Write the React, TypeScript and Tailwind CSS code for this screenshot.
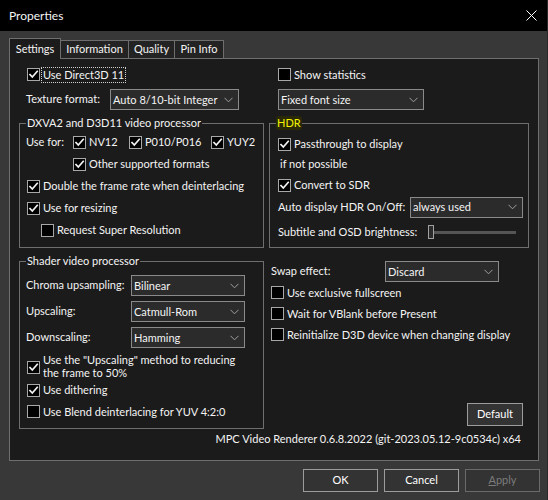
import React from 'react';

// Properties dialog - MPC Video Renderer settings page (dark theme)

function CheckMark() {
  return (
    <svg width="11" height="11" viewBox="0 0 11 11" className="block">
      <path d="M2 5.6 L4.3 8 L9.2 2.4" fill="none" stroke="#f2f2f2" strokeWidth="1.7" strokeLinecap="square" />
    </svg>
  );
}

function Check({ checked, label, focus }: { checked?: boolean; label: React.ReactNode; focus?: boolean }) {
  return (
    <div className="flex items-center whitespace-nowrap">
      <div className="w-[13px] h-[13px] shrink-0 border border-[#a8a8a8] bg-black flex items-center justify-center">
        {checked && <CheckMark />}
      </div>
      <span className={focus ? 'ml-[2px] px-px outline outline-1 outline-dotted outline-[#d0d0d0] leading-[14px]' : 'ml-[3px] leading-[14px]'}>
        {label}
      </span>
    </div>
  );
}

function Chevron() {
  return (
    <svg width="9" height="6" viewBox="0 0 9 6" className="block">
      <path d="M0.5 0.8 L4.5 4.8 L8.5 0.8" fill="none" stroke="#a0a0a0" strokeWidth="1" />
    </svg>
  );
}

function Select({ value, className }: { value: string; className: string }) {
  return (
    <div className={`h-[21px] shrink-0 border border-[#8a8a8a] bg-[#2b2b2b] flex items-center justify-between pl-[2px] pr-[5px] whitespace-nowrap ${className}`}>
      <span className="leading-[14px]">{value}</span>
      <Chevron />
    </div>
  );
}

function Group({ title, className, children, hdr }: { title: string; className: string; children: React.ReactNode; hdr?: boolean }) {
  return (
    <div className={`relative border border-[#6e6e6e] ${className}`}>
      <span
        className={
          hdr
            ? 'absolute left-[6px] top-[-8px] px-px leading-[14px] text-[#f4f400] bg-[#2a2a08] rounded-[3px]'
            : 'absolute left-[6px] top-[-8px] px-px leading-[14px] bg-[#1b1b1b] whitespace-nowrap'
        }
      >
        {title}
      </span>
      {children}
    </div>
  );
}

function Button({ label, disabled, className }: { label: React.ReactNode; disabled?: boolean; className: string }) {
  return (
    <div
      className={`h-[23px] flex items-center justify-center bg-[#333333] border ${
        disabled ? 'border-[#6a6a6a] text-[#7c7c7c]' : 'border-[#9c9c9c] text-white'
      } ${className}`}
    >
      {label}
    </div>
  );
}

export default function App() {
  return (
    <div className="w-[548px] h-[500px] bg-[#383838] text-[#f4f4f4] text-[11px] font-['Lato',sans-serif] flex flex-col overflow-hidden border-r border-[#2a2a2a] whitespace-nowrap">
      {/* title bar */}
      <div className="h-[31px] bg-black flex items-center justify-between pl-[9px] pr-[10px] shrink-0">
        <span className="text-[12px]">Properties</span>
        <svg width="11" height="11" viewBox="0 0 11 11">
          <path d="M0.5 0.5 L10.5 10.5 M10.5 0.5 L0.5 10.5" stroke="#ffffff" strokeWidth="1" />
        </svg>
      </div>

      {/* tabs */}
      <div className="mt-[7px] ml-[9px] h-[20px] flex items-end shrink-0">
        <div className="relative z-10 h-[21px] -mb-px w-[52px] bg-[#1b1b1b] border border-b-0 border-[#6e6e6e] flex items-center justify-center">
          Settings
        </div>
        <div className="h-[18px] w-[68px] bg-[#232323] border border-b-0 border-l-0 border-[#6e6e6e] flex items-center justify-center">
          Information
        </div>
        <div className="h-[18px] w-[46px] bg-[#232323] border border-b-0 border-l-0 border-[#6e6e6e] flex items-center justify-center">
          Quality
        </div>
        <div className="h-[18px] w-[49px] bg-[#232323] border border-b-0 border-l-0 border-[#6e6e6e] flex items-center justify-center">
          Pin Info
        </div>
      </div>

      {/* page */}
      <div className="ml-[9px] w-[530px] h-[403px] border border-[#6e6e6e] bg-[#1b1b1b] flex flex-col shrink-0">
        <div className="flex pl-[9px] gap-[5px]">
          {/* left column */}
          <div className="w-[245px] flex flex-col">
            <div className="mt-[9px] h-[13px] pl-[8px] flex items-center">
              <Check checked focus label="Use Direct3D 11" />
            </div>
            <div className="mt-[8px] h-[21px] pl-[7px] flex items-center">
              <span className="w-[84px]">Texture format:</span>
              <Select value="Auto 8/10-bit Integer" className="w-[129px]" />
            </div>

            <Group title="DXVA2 and D3D11 video processor" className="mt-[13px] h-[125px] w-[245px] pt-[7px]">
              <div className="h-[22px] pl-[6px] flex items-center">
                <span className="w-[47px]">Use for:</span>
                <div className="w-[56px]">
                  <Check checked label="NV12" />
                </div>
                <div className="w-[82px]">
                  <Check checked label="P010/P016" />
                </div>
                <Check checked label="YUY2" />
              </div>
              <div className="h-[22px] pl-[53px] flex items-center">
                <Check checked label="Other supported formats" />
              </div>
              <div className="h-[22px] pl-[7px] flex items-center">
                <Check checked label="Double the frame rate when deinterlacing" />
              </div>
              <div className="h-[22px] pl-[7px] flex items-center">
                <Check checked label="Use for resizing" />
              </div>
              <div className="h-[22px] pl-[21px] flex items-center">
                <Check label="Request Super Resolution" />
              </div>
            </Group>

            <Group title="Shader video processor" className="mt-[13px] h-[168px] w-[245px] pt-[13px]">
              <div className="h-[21px] pl-[6px] flex items-center">
                <span className="w-[105px]">Chroma upsampling:</span>
                <Select value="Bilinear" className="w-[114px]" />
              </div>
              <div className="mt-[5px] h-[21px] pl-[6px] flex items-center">
                <span className="w-[105px]">Upscaling:</span>
                <Select value="Catmull-Rom" className="w-[114px]" />
              </div>
              <div className="mt-[5px] h-[21px] pl-[6px] flex items-center">
                <span className="w-[105px]">Downscaling:</span>
                <Select value="Hamming" className="w-[114px]" />
              </div>
              <div className="mt-[5px] pl-[7px] flex items-start">
                <div className="mt-[8px] w-[13px] h-[13px] shrink-0 border border-[#a8a8a8] bg-black flex items-center justify-center">
                  <CheckMark />
                </div>
                <span className="ml-[3px] leading-[13px]">
                  Use the "Upscaling" method to reducing
                  <br />
                  the frame to 50%
                </span>
              </div>
              <div className="h-[22px] pl-[7px] flex items-center">
                <Check checked label="Use dithering" />
              </div>
              <div className="h-[21px] pl-[7px] flex items-center">
                <Check label="Use Blend deinterlacing for YUV 4:2:0" />
              </div>
            </Group>
          </div>

          {/* right column */}
          <div className="w-[260px] flex flex-col">
            <div className="mt-[9px] h-[13px] pl-[9px] flex items-center">
              <Check label="Show statistics" />
            </div>
            <div className="mt-[8px] h-[21px] pl-[9px] flex items-center">
              <Select value="Fixed font size" className="w-[146px]" />
            </div>

            <Group hdr title="HDR" className="mt-[13px] h-[125px] w-[260px] pt-[10px]">
              <div className="h-[20px] pl-[8px] flex items-center">
                <Check checked label="Passthrough to display" />
              </div>
              <div className="h-[20px] pl-[10px] flex items-center">if not possible</div>
              <div className="h-[22px] pl-[8px] flex items-center">
                <Check checked label="Convert to SDR" />
              </div>
              <div className="h-[22px] pl-[8px] flex items-center">
                <span className="w-[132px]">Auto display HDR On/Off:</span>
                <Select value="always used" className="w-[113px]" />
              </div>
              <div className="h-[28px] pl-[8px] flex items-center">
                <span className="w-[150px]">Subtitle and OSD brightness:</span>
                <div className="flex items-center">
                  <div className="w-[6px] h-[14px] border border-[#a0a0a0] bg-[#2b2b2b]" />
                  <div className="w-[82px] h-[3px] bg-[#555555]" />
                </div>
              </div>
            </Group>

            <div className="mt-[13px] h-[168px] flex flex-col">
              <div className="h-[21px] pl-[2px] flex items-center">
                <span className="w-[114px]">Swap effect:</span>
                <Select value="Discard" className="w-[114px]" />
              </div>
              <div className="h-[21px] pl-[2px] flex items-center">
                <Check label="Use exclusive fullscreen" />
              </div>
              <div className="h-[21px] pl-[2px] flex items-center">
                <Check label="Wait for VBlank before Present" />
              </div>
              <div className="h-[21px] pl-[2px] flex items-center">
                <Check label="Reinitialize D3D device when changing display" />
              </div>
              <div className="mt-auto mb-[3px] flex justify-end pr-[6px]">
                <Button label="Default" className="w-[56px]" />
              </div>
            </div>
          </div>
        </div>

        <div className="mt-[3px] h-[14px] leading-[14px] text-right pr-[17px]">
          MPC Video Renderer 0.6.8.2022 (git-2023.05.12-9c0534c) x64
        </div>
      </div>

      {/* dialog buttons */}
      <div className="mt-[8px] flex justify-end gap-[6px] pr-[7px]">
        <Button label="OK" className="w-[75px]" />
        <Button label="Cancel" className="w-[75px]" />
        <Button
          disabled
          label={
            <span>
              <span className="underline">A</span>pply
            </span>
          }
          className="w-[75px]"
        />
      </div>
    </div>
  );
}
